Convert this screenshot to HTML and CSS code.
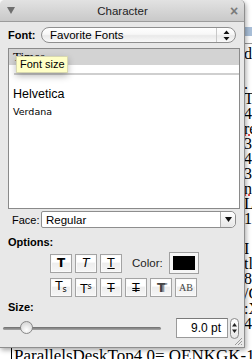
FILE: index.html
```html
<!DOCTYPE html>
<html>
<head>
<meta charset="utf-8">
<link rel="stylesheet" href="styles.css">
</head>
<body>
<div class="doc">
  <div class="toolrow"><span class="tb-icon"></span></div>
  <div class="rule"></div>
  <div class="line">de</div>
  <div class="line">&nbsp;</div>
  <div class="line dot">.</div>
  <div class="line">T</div>
  <div class="line">4</div>
  <div class="line"><span class="sp">re</span></div>
  <div class="line">32</div>
  <div class="line">4</div>
  <div class="line">32</div>
  <div class="line"><span class="sp">na</span></div>
  <div class="line">L</div>
  <div class="line">1</div>
  <div class="line">&nbsp;</div>
  <div class="line">I</div>
  <div class="line">tl</div>
  <div class="line">8</div>
  <div class="line">/C</div>
  <div class="line">:X</div>
  <div class="line">42</div>
  <div class="line">&nbsp;</div>
  <div class="line last"><span class="cell">ParallelsDeskTop4.0= QENKGK-128XF</span></div>
</div>

<div class="window">
  <div class="titlebar">
    <span class="disclosure"></span>
    <span class="title">Character</span>
    <span class="close">×</span>
  </div>
  <div class="body">
    <div class="row fontrow">
      <span class="label bold">Font:</span>
      <div class="popup rounded">
        <span class="popup-text">Favorite Fonts</span>
        <span class="stepper-arrows">
          <svg width="7" height="11" viewBox="0 0 7 11"><path d="M3.5 0.5 L6.5 4 L0.5 4 Z M3.5 10.5 L6.5 7 L0.5 7 Z" fill="#111"/></svg>
        </span>
      </div>
    </div>

    <div class="fontlist">
      <div class="item selected serif">Times</div>
      <div class="sep"></div>
      <div class="item helv">Helvetica</div>
      <div class="item verd">Verdana</div>
      <div class="tooltip">Font size</div>
    </div>

    <div class="row facerow">
      <span class="label">Face:</span>
      <div class="popup square">
        <span class="popup-text">Regular</span>
        <span class="arrowbox">
          <svg width="7" height="5" viewBox="0 0 7 5"><path d="M0 0 H7 L3.5 5 Z" fill="#111"/></svg>
        </span>
      </div>
    </div>

    <div class="label bold section">Options:</div>
    <div class="btnrow first">
      <span class="btn"><b class="g-bold">T</b></span>
      <span class="btn"><i class="g-ital">T</i></span>
      <span class="btn"><span class="g-under">T</span></span>
      <span class="label colorlabel">Color:</span>
      <span class="well"><span class="swatch"></span></span>
    </div>
    <div class="btnrow">
      <span class="btn"><span class="g">T<sub>s</sub></span></span>
      <span class="btn"><span class="g">T<sup>s</sup></span></span>
      <span class="btn"><span class="g strike">T</span></span>
      <span class="btn"><span class="g dstrike">T</span></span>
      <span class="btn"><span class="g shadowT">T</span></span>
      <span class="btn"><span class="g smallcaps">AB</span></span>
    </div>

    <div class="label bold section size">Size:</div>
    <div class="sizerow">
      <div class="slider">
        <div class="track"></div>
        <div class="knob"></div>
      </div>
      <div class="field">9.0 pt</div>
      <div class="stepper">
        <svg width="7" height="14" viewBox="0 0 7 14"><path d="M3.5 2 L6 5.5 L1 5.5 Z M3.5 12 L6 8.5 L1 8.5 Z" fill="#222"/></svg>
      </div>
    </div>
  </div>
  <div class="grip">
    <svg width="10" height="10" viewBox="0 0 10 10"><path d="M9 2 L2 9 M9 5 L5 9 M9 8 L8 9" stroke="#999" stroke-width="1"/></svg>
  </div>
</div>
</body>
</html>
```

FILE: styles.css
```css
html, body {
  margin: 0;
  padding: 0;
  width: 252px;
  height: 359px;
  overflow: hidden;
  background: #fff;
}

.doc {
  font-family: "Liberation Serif", serif;
  font-size: 16px;
  line-height: 15px;
  color: #000;
}
.toolrow {
  margin-left: 245px;
  padding-top: 27px;
  box-sizing: border-box;
  height: 43px;
}
.tb-icon {
  display: block;
  width: 7px;
  height: 9px;
  background: #a9bfd8;
}
.rule {
  height: 1px;
  margin-left: 244px;
  background: #999;
  margin-bottom: 2px;
}
.line {
  margin-left: 244px;
  white-space: nowrap;
  height: 15px;
  overflow: hidden;
}
.sp {
  text-decoration: underline dotted #d22;
}
.line.last {
  margin-left: 11px;
  margin-top: 2px;
  font-size: 17px;
  height: 20px;
}
.cell {
  border-left: 1px solid #000;
  padding-left: 2px;
}

/* window */
.window {
  position: absolute;
  left: 0;
  top: 0;
  width: 244px;
  height: 347px;
  background: #e8e8e8;
  border-right: 1px solid #8e8e8e;
  border-bottom: 1px solid #8e8e8e;
  box-shadow: 1px 2px 5px rgba(0,0,0,0.35);
  font-family: "Liberation Sans", Arial, sans-serif;
  font-size: 11px;
  color: #000;
  border-top-left-radius: 5px;
  border-top-right-radius: 5px;
}
.titlebar {
  height: 22px;
  background: linear-gradient(#e2e2e2, #c9c9c9);
  border-bottom: 1px solid #9c9c9c;
  box-sizing: border-box;
  display: flex;
  align-items: center;
  border-top-left-radius: 5px;
  border-top-right-radius: 5px;
}
.disclosure {
  width: 0;
  height: 0;
  border-left: 4px solid transparent;
  border-right: 4px solid transparent;
  border-top: 7px solid #6e6e6e;
  margin-left: 7px;
}
.title {
  flex: 1;
  text-align: center;
  font-size: 11.5px;
  color: #222;
  padding-left: 2px;
}
.close {
  font-size: 14px;
  font-weight: bold;
  color: #7a7a7a;
  margin-right: 4px;
  width: 12px;
  text-align: center;
}

.body {
  padding: 5px 0 0 8px;
}
.row {
  display: flex;
  align-items: center;
}
.label {
  font-size: 11px;
}
.bold {
  font-weight: bold;
}
.fontrow {
  height: 16px;
}
.fontrow .label {
  width: 33px;
}
.popup {
  height: 16px;
  box-sizing: border-box;
  border: 1px solid #8f8f8f;
  background: linear-gradient(#ffffff, #f7f7f7 45%, #e9e9e9 55%, #f9f9f9);
  display: flex;
  align-items: center;
}
.popup.rounded {
  width: 195px;
  border-radius: 8px;
}
.popup-text {
  flex: 1;
  padding-left: 8px;
  font-size: 11.5px;
}
.stepper-arrows {
  width: 18px;
  height: 100%;
  border-left: 1px solid #c8c8c8;
  display: flex;
  align-items: center;
  justify-content: center;
}

.fontlist {
  margin-top: 5px;
  width: 232px;
  height: 161px;
  box-sizing: border-box;
  border: 1px solid #8a8a8a;
  background: #fff;
  position: relative;
}
.item {
  height: 18px;
  line-height: 18px;
  padding-left: 4px;
}
.item.selected {
  height: 16px;
  line-height: 16px;
  background: #d3d3d3;
  font-size: 13px;
}
.serif {
  font-family: "Liberation Serif", serif;
}
.sep {
  margin: 8px 0 10px 5px;
  height: 2px;
  background: #cfcfcf;
}
.helv {
  font-size: 12.5px;
}
.verd {
  font-family: "DejaVu Sans", sans-serif;
  font-size: 9.5px;
}
.tooltip {
  position: absolute;
  left: 7px;
  top: 7px;
  width: 52px;
  height: 17px;
  box-sizing: border-box;
  background: #ffffc6;
  border: 1px solid #d8d8b0;
  font-size: 11px;
  line-height: 15px;
  padding-left: 3px;
  box-shadow: 0 3px 7px rgba(0,0,0,0.28);
}

.facerow {
  margin-top: 2px;
  height: 17px;
}
.facerow .label {
  width: 33px;
  padding-left: 4px;
  box-sizing: border-box;
}
.popup.square {
  width: 195px;
  height: 17px;
  border-radius: 2px 5px 5px 2px;
  background: #fff;
  border-color: #8e8e8e;
}
.popup.square .popup-text {
  padding-left: 4px;
  font-size: 11.5px;
}
.arrowbox {
  width: 14px;
  height: 100%;
  border-left: 1px solid #b0b0b0;
  display: flex;
  align-items: center;
  justify-content: center;
  background: linear-gradient(#fff, #e6e6e6);
  border-radius: 0 5px 5px 0;
}

.section {
  margin-top: 8px;
  height: 14px;
}
.btnrow {
  display: flex;
  align-items: center;
  gap: 3px;
  padding-left: 42px;
  margin-top: 4px;
}
.btnrow.first {
  margin-top: 2px;
}
.btn {
  width: 22px;
  height: 19px;
  box-sizing: border-box;
  border: 1px solid #a3a3a3;
  background: linear-gradient(#ffffff, #ffffff 40%, #eeeeee 50%, #f6f6f6);
  box-shadow: inset 0 0 0 1px #fafafa;
  display: flex;
  align-items: center;
  justify-content: center;
  font-size: 12px;
  font-family: "DejaVu Sans", sans-serif;
}
.g-bold { font-weight: bold; }
.g-ital { font-style: italic; font-weight: normal; }
.g-under { text-decoration: underline; text-underline-offset: 1px; }
.g { line-height: 12px; }
.g sub, .g sup { font-size: 8px; }
.g sub { vertical-align: -2px; }
.g sup { vertical-align: 4px; }
.strike { text-decoration: line-through; }
.dstrike { text-decoration: line-through double; }
.shadowT { color: #444; font-weight: bold; text-shadow: 2px 0 0 #999; }
.smallcaps { font-family: "Liberation Serif", serif; font-size: 10px; color: #444; }
.colorlabel {
  margin-left: 7px;
  font-size: 11.5px;
  color: #222;
}
.well {
  margin-left: 3px;
  width: 30px;
  height: 22px;
  box-sizing: border-box;
  border: 1px solid #a0a0a0;
  background: #f6f6f6;
  padding: 3px;
  display: flex;
}
.swatch {
  flex: 1;
  background: #000;
}

.size {
  margin-top: 4px;
}
.sizerow {
  display: flex;
  align-items: center;
  height: 22px;
  margin-top: 2px;
}
.slider {
  width: 158px;
  height: 14px;
  position: relative;
  margin-left: -5px;
  display: flex;
  align-items: center;
}
.track {
  flex: 1;
  height: 3px;
  border-radius: 2px;
  background: linear-gradient(#6c6c6c, #a8a8a8);
}
.knob {
  position: absolute;
  left: 17px;
  top: 0;
  width: 13px;
  height: 13px;
  box-sizing: border-box;
  border-radius: 50%;
  border: 1px solid #888;
  background: radial-gradient(circle at 50% 70%, #ffffff, #dcdcdc 70%, #c4c4c4);
}
.field {
  margin-left: 15px;
  width: 52px;
  height: 20px;
  box-sizing: border-box;
  border: 1px solid #9a9a9a;
  border-top-color: #7a7a7a;
  background: #fff;
  font-size: 12px;
  line-height: 18px;
  text-align: right;
  padding-right: 6px;
}
.stepper {
  margin-left: 2px;
  width: 9px;
  height: 21px;
  box-sizing: border-box;
  border: 1px solid #8a8a8a;
  border-radius: 5px;
  background: linear-gradient(#fff, #e8e8e8);
  display: flex;
  align-items: center;
  justify-content: center;
}
.stepper svg { display: block; }
.grip {
  position: absolute;
  right: 1px;
  bottom: 1px;
  width: 10px;
  height: 10px;
}
.grip svg { display: block; }
```
